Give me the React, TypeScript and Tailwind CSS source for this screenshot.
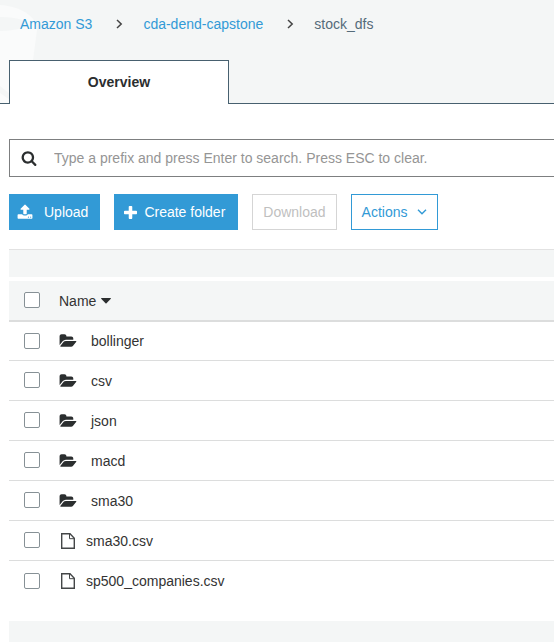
import React from "react";

type Entry = { name: string; kind: "folder" | "file" };

const entries: Entry[] = [
  { name: "bollinger", kind: "folder" },
  { name: "csv", kind: "folder" },
  { name: "json", kind: "folder" },
  { name: "macd", kind: "folder" },
  { name: "sma30", kind: "folder" },
  { name: "sma30.csv", kind: "file" },
  { name: "sp500_companies.csv", kind: "file" },
];

function SearchIcon() {
  return (
    <svg className="h-4 w-4 shrink-0 fill-[#2b2e2f]" viewBox="0 0 1792 1792" aria-hidden="true">
      <path d="M1216 832q0-185-131.5-316.5t-316.5-131.5-316.5 131.5-131.5 316.5 131.5 316.5 316.5 131.5 316.5-131.5 131.5-316.5zm512 832q0 52-38 90t-90 38q-54 0-90-38l-343-342q-179 124-399 124-143 0-273.5-55.5t-225-150-150-225-55.5-273.5 55.5-273.5 150-225 225-150 273.5-55.5 273.5 55.5 225 150 150 225 55.5 273.5q0 220-124 399l343 343q37 37 37 90z" />
    </svg>
  );
}

function UploadIcon() {
  return (
    <svg className="h-4 w-4 shrink-0 fill-white" viewBox="0 0 1792 1792" aria-hidden="true">
      <path d="M1344 1472q0-26-19-45t-45-19-45 19-19 45 19 45 45 19 45-19 19-45zm256 0q0-26-19-45t-45-19-45 19-19 45 19 45 45 19 45-19 19-45zm128-224v320q0 40-28 68t-68 28h-1472q-40 0-68-28t-28-68v-320q0-40 28-68t68-28h427q21 56 70.5 92t110.5 36h256q61 0 110.5-36t70.5-92h427q40 0 68 28t28 68zm-325-648q-17 40-59 40h-256v448q0 26-19 45t-45 19h-256q-26 0-45-19t-19-45v-448h-256q-42 0-59-40-17-39 14-69l448-448q18-19 45-19t45 19l448 448q31 30 14 69z" />
    </svg>
  );
}

function PlusIcon() {
  return (
    <svg className="h-[13px] w-[13px] shrink-0 fill-white" viewBox="192 128 1408 1408" aria-hidden="true">
      <path d="M1600 736v192q0 40-28 68t-68 28h-416v416q0 40-28 68t-68 28h-192q-40 0-68-28t-28-68v-416h-416q-40 0-68-28t-28-68v-192q0-40 28-68t68-28h416v-416q0-40 28-68t68-28h192q40 0 68 28t28 68v416h416q40 0 68 28t28 68z" />
    </svg>
  );
}

function FolderIcon() {
  return (
    <svg className="h-4 w-[18px] shrink-0 fill-[#2b2e2f]" viewBox="0 0 2016 1792" aria-hidden="true">
      <path d="M1943 952q0 31-31 66l-336 396q-43 51-120.5 86.5t-143.5 35.5h-1088q-34 0-60.5-13t-26.5-43q0-31 31-66l336-396q43-51 120.5-86.5t143.5-35.5h1088q34 0 60.5 13t26.5 43zm-343-344v160h-832q-94 0-197 47.5t-164 119.5l-337 396-5 6q0-4-.5-12.5t-.5-12.5v-960q0-92 66-158t158-66h320q92 0 158 66t66 158v32h544q92 0 158 66t66 158z" />
    </svg>
  );
}

function FileIcon() {
  return (
    <svg className="ml-0.5 h-4 w-[14px] shrink-0" viewBox="0 0 14 16" fill="none" stroke="#444748" strokeWidth="1.4" aria-hidden="true">
      <path d="M0.7 0.7h8.3l4.3 4.6v10h-12.6z" />
      <path d="M8.5 0.7v5h4.8" strokeWidth="1" />
    </svg>
  );
}

function Crumb() {
  return (
    <svg className="ml-6 mr-5 h-[10px] w-[7px] shrink-0" viewBox="0 0 7 10" fill="none" stroke="#444" strokeWidth="1.5" aria-hidden="true">
      <path d="M1 1l4.2 4L1 9" />
    </svg>
  );
}

function Check({ label }: { label: string }) {
  return (
    <input
      type="checkbox"
      aria-label={label}
      className="block h-4 w-4 appearance-none rounded-xs border border-[#879196] bg-white checked:bg-[#329ad6]"
    />
  );
}

export default function App() {
  return (
    <div className="min-h-screen overflow-hidden bg-white font-['Liberation_Sans',Arial,sans-serif] text-sm text-[#333]">
      <header className="relative bg-[#f4f6f6]">
        <svg className="absolute left-0 top-0 h-[103px] w-10" viewBox="0 0 40 103" aria-hidden="true">
          <path d="M0 5C18 6 37 15 37 30L33 60L22 103H0Z" fill="#fafbfb" />
          <path d="M0 17C14 17 27 20 27 24C27 28 12 31 0 31Z" fill="#f4f6f6" />
          <path d="M0 86L10 94V100L0 93Z" fill="#f4f6f6" />
        </svg>
        <nav aria-label="Breadcrumb" className="relative flex h-[60px] items-start pl-5 pt-3">
          <div className="flex h-6 items-center">
            <a href="#s3" className="text-[#329ad6]">Amazon S3</a>
            <Crumb />
            <a href="#bucket" className="text-[#329ad6]">cda-dend-capstone</a>
            <Crumb />
            <span className="text-[#546b7a]">stock_dfs</span>
          </div>
        </nav>
        <div role="tablist" className="relative flex h-11">
          <span className="w-[9px] border-b border-[#47606f]" />
          <button role="tab" aria-selected="true" className="w-[220px] border border-b-0 border-[#47606f] bg-white pb-0.5 font-bold text-[#2b2e2f]">
            Overview
          </button>
          <span className="flex-1 border-b border-[#47606f]" />
        </div>
      </header>

      <main className="pl-[9px] pt-[35px]">
        <label className="flex h-[38px] items-center gap-[17px] border border-r-0 border-[#7d7f80] pl-[11px]">
          <SearchIcon />
          <input
            type="text"
            aria-label="Search by prefix"
            placeholder="Type a prefix and press Enter to search. Press ESC to clear."
            className="min-w-0 flex-1 bg-transparent outline-none placeholder:text-[#959595]"
          />
        </label>

        <div className="mt-[17px] flex gap-[14px]">
          <button className="flex h-9 items-center gap-[11px] bg-[#329ad6] pl-2 pr-3 text-white">
            <UploadIcon />
            Upload
          </button>
          <button className="flex h-9 items-center gap-[7px] bg-[#329ad6] pl-[10px] pr-[13px] text-white">
            <PlusIcon />
            Create folder
          </button>
          <button disabled className="h-9 border border-[#d5d5d5] px-[10px] text-[#bfbfbf]">
            Download
          </button>
          <button className="flex h-9 items-center gap-[9px] border border-[#329ad6] px-[10px] text-[#329ad6]">
            Actions
            <svg className="h-[6px] w-[10px]" viewBox="0 0 10 6" fill="none" stroke="#329ad6" strokeWidth="1.4" aria-hidden="true">
              <path d="M1 0.8l4 4l4-4" />
            </svg>
          </button>
        </div>

        <div className="mt-[19px] h-7 border-t border-[#e2e2e2] bg-[#f4f6f6]" />

        <table className="mt-1 w-full border-separate border-spacing-0 text-left">
          <thead>
            <tr className="bg-[#f4f6f6]">
              <th className="h-[41px] w-[50px] border-b-2 border-[#dcdddd] p-0 pb-px pl-[15px]">
                <Check label="Select all" />
              </th>
              <th className="border-b-2 border-[#dcdddd] p-0 font-normal">
                <button className="flex items-center gap-[5px]">
                  Name
                  <svg className="h-[6px] w-[10px] fill-[#2b2e2f]" viewBox="0 0 10 6" aria-hidden="true">
                    <path d="M0.6 0h8.8q0.8 0 0.4 0.7L5.5 5.3q-0.5 0.5-1 0L0.2 0.7q-0.4-0.7 0.4-0.7z" />
                  </svg>
                </button>
              </th>
            </tr>
          </thead>
          <tbody>
            {entries.map((entry) => (
              <tr key={entry.name} className="group">
                <td className="h-10 border-b border-[#dcdddd] p-0 pb-px pl-[15px] group-first:h-[39px] group-first:pb-0 group-last:border-b-0 group-last:pb-0">
                  <Check label={`Select ${entry.name}`} />
                </td>
                <td className="border-b border-[#dcdddd] p-0 group-last:border-b-0">
                  <a
                    href={`#${entry.name}`}
                    className={
                      entry.kind === "folder"
                        ? "flex items-center gap-[14px]"
                        : "flex items-center gap-[11px]"
                    }
                  >
                    {entry.kind === "folder" ? <FolderIcon /> : <FileIcon />}
                    {entry.name}
                  </a>
                </td>
              </tr>
            ))}
          </tbody>
        </table>

        <div className="mt-5 h-7 bg-[#f4f6f6]" />
      </main>
    </div>
  );
}
